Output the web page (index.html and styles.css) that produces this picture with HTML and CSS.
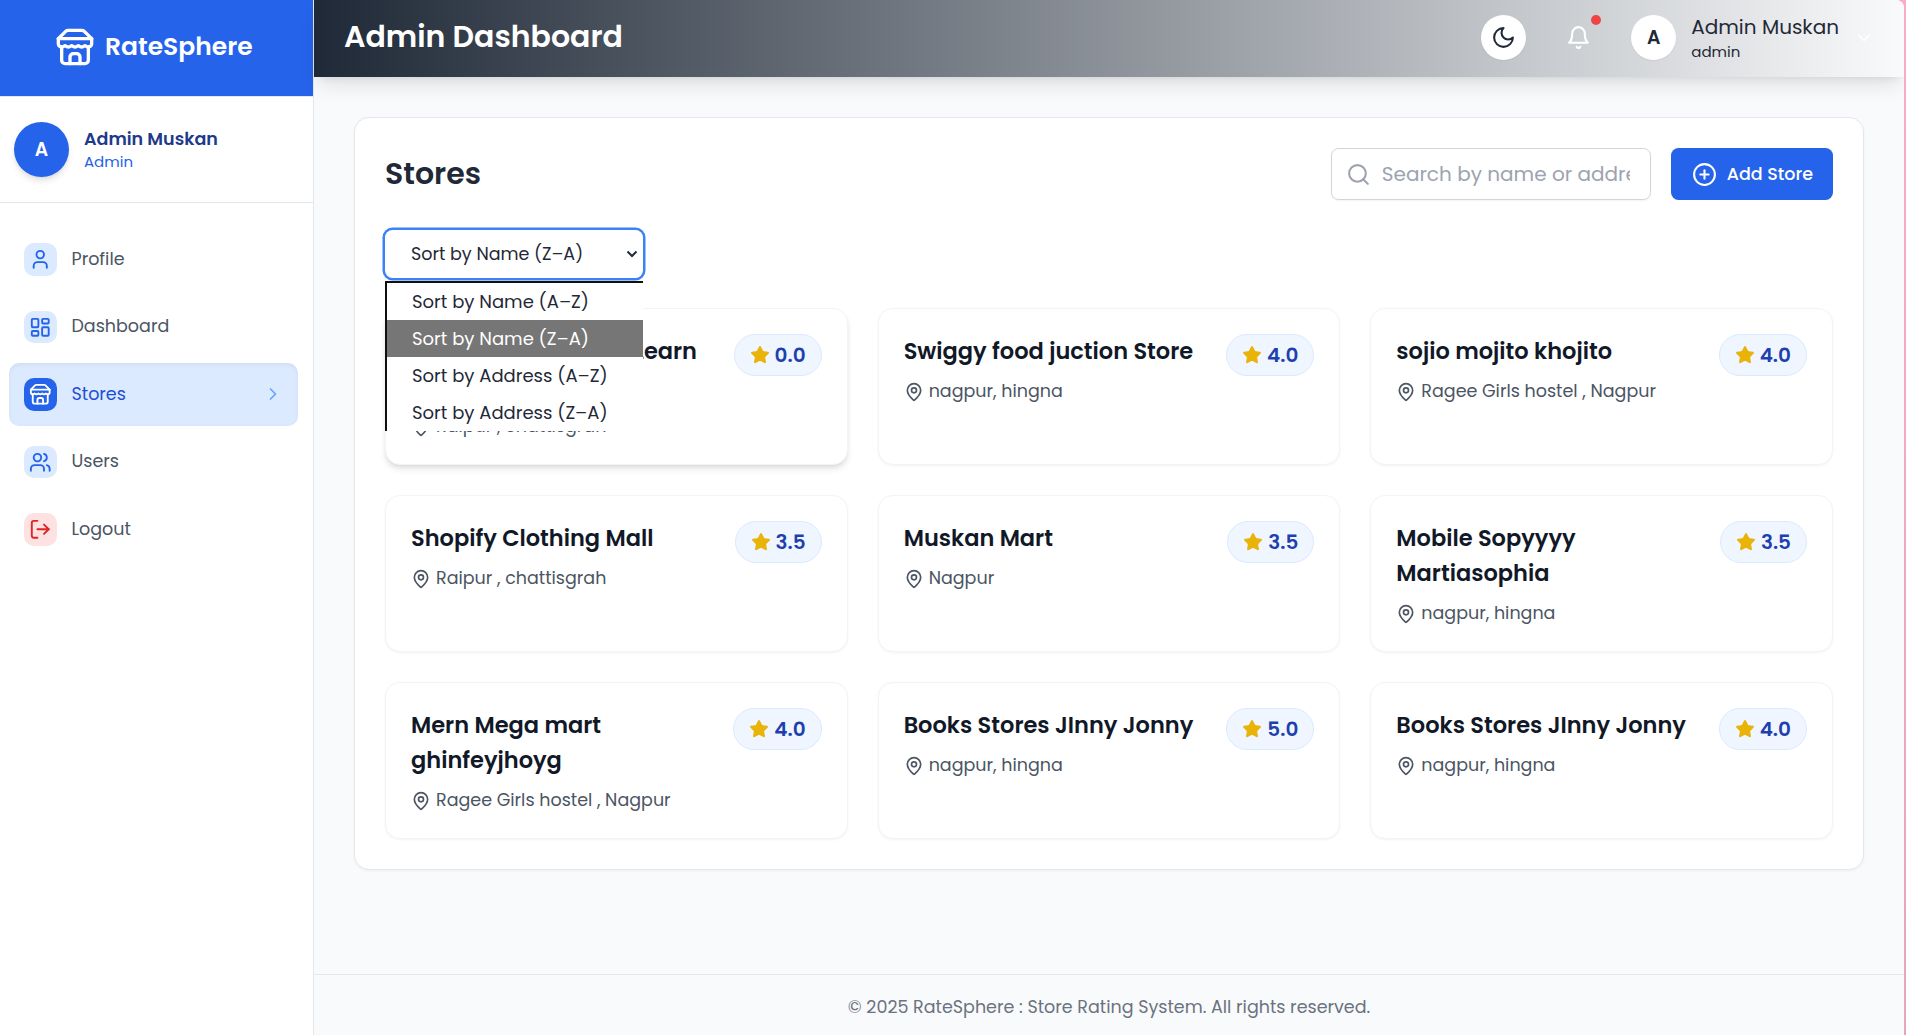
FILE: index.html
```
<!DOCTYPE html>
<html lang="en">
<head>
<meta charset="utf-8">
<title>RateSphere - Admin Dashboard</title>
<link rel="stylesheet" href="styles.css">
</head>
<body>
<svg class="sprite" aria-hidden="true">
  <symbol id="store" viewBox="0 0 24 24"><path d="m2 7 4.41-4.41A2 2 0 0 1 7.83 2h8.34a2 2 0 0 1 1.42.59L22 7"/><path d="M4 12v8a2 2 0 0 0 2 2h12a2 2 0 0 0 2-2v-8"/><path d="M15 22v-4a2 2 0 0 0-2-2h-2a2 2 0 0 0-2 2v4"/><path d="M2 7h20"/><path d="M22 7v3a2 2 0 0 1-2 2a2.7 2.7 0 0 1-1.59-.63.7.7 0 0 0-.82 0A2.7 2.7 0 0 1 16 12a2.7 2.7 0 0 1-1.59-.63.7.7 0 0 0-.82 0A2.7 2.7 0 0 1 12 12a2.7 2.7 0 0 1-1.59-.63.7.7 0 0 0-.82 0A2.7 2.7 0 0 1 8 12a2.7 2.7 0 0 1-1.59-.63.7.7 0 0 0-.82 0A2.7 2.7 0 0 1 4 12a2 2 0 0 1-2-2V7"/></symbol>
  <symbol id="user" viewBox="0 0 24 24"><path d="M19 21v-2a4 4 0 0 0-4-4H9a4 4 0 0 0-4 4v2"/><circle cx="12" cy="7" r="4"/></symbol>
  <symbol id="dashboard" viewBox="0 0 24 24"><rect x="3" y="3" width="7" height="9" rx="1"/><rect x="14" y="3" width="7" height="5" rx="1"/><rect x="14" y="12" width="7" height="9" rx="1"/><rect x="3" y="16" width="7" height="5" rx="1"/></symbol>
  <symbol id="users" viewBox="0 0 24 24"><path d="M16 21v-2a4 4 0 0 0-4-4H6a4 4 0 0 0-4 4v2"/><circle cx="9" cy="7" r="4"/><path d="M22 21v-2a4 4 0 0 0-3-3.87"/><path d="M16 3.13a4 4 0 0 1 0 7.75"/></symbol>
  <symbol id="logout" viewBox="0 0 24 24"><path d="M9 21H5a2 2 0 0 1-2-2V5a2 2 0 0 1 2-2h4"/><path d="m16 17 5-5-5-5"/><path d="M21 12H9"/></symbol>
  <symbol id="right" viewBox="0 0 24 24"><path d="m9 18 6-6-6-6"/></symbol>
  <symbol id="down" viewBox="0 0 24 24"><path d="m6 9 6 6 6-6"/></symbol>
  <symbol id="moon" viewBox="0 0 24 24"><path d="M12 3a6 6 0 0 0 9 9 9 9 0 1 1-9-9Z"/></symbol>
  <symbol id="bell" viewBox="0 0 24 24"><path d="M6 8a6 6 0 0 1 12 0c0 7 3 9 3 9H3s3-2 3-9"/><path d="M10.3 21a1.94 1.94 0 0 0 3.4 0"/></symbol>
  <symbol id="search" viewBox="0 0 24 24"><circle cx="11" cy="11" r="8"/><path d="m21 21-4.3-4.3"/></symbol>
  <symbol id="plus" viewBox="0 0 24 24"><circle cx="12" cy="12" r="10"/><path d="M8 12h8"/><path d="M12 8v8"/></symbol>
  <symbol id="pin" viewBox="0 0 24 24"><path d="M20 10c0 4.993-5.539 10.193-7.399 11.799a1 1 0 0 1-1.202 0C9.539 20.193 4 14.993 4 10a8 8 0 0 1 16 0"/><circle cx="12" cy="10" r="3"/></symbol>
  <symbol id="star" viewBox="0 0 24 24"><path d="M11.53 2.3a.53.53 0 0 1 .95 0l2.31 4.68a2.12 2.12 0 0 0 1.6 1.16l5.16.76a.53.53 0 0 1 .3.9l-3.74 3.64a2.12 2.12 0 0 0-.61 1.88l.88 5.14a.53.53 0 0 1-.77.56l-4.62-2.43a2.12 2.12 0 0 0-1.97 0L6.4 21.02a.53.53 0 0 1-.77-.56l.88-5.14a2.12 2.12 0 0 0-.61-1.88L2.16 9.8a.53.53 0 0 1 .29-.9l5.17-.76a2.12 2.12 0 0 0 1.6-1.16z"/></symbol>
</svg>
<div class="app">
  <aside class="sidebar">
    <div class="brand"><svg class="icon i40"><use href="#store"/></svg><span>RateSphere</span></div>
    <div class="account">
      <div class="account-avatar">A</div>
      <div><div class="account-name">Admin Muskan</div><div class="account-role">Admin</div></div>
    </div>
    <nav class="nav">
      <a class="nav-item"><span class="nav-icon"><svg class="icon i22"><use href="#user"/></svg></span>Profile</a>
      <a class="nav-item"><span class="nav-icon"><svg class="icon i22"><use href="#dashboard"/></svg></span>Dashboard</a>
      <a class="nav-item active"><span class="nav-icon"><svg class="icon i22"><use href="#store"/></svg></span>Stores<svg class="icon i20 nav-arrow"><use href="#right"/></svg></a>
      <a class="nav-item"><span class="nav-icon"><svg class="icon i22"><use href="#users"/></svg></span>Users</a>
      <a class="nav-item"><span class="nav-icon danger"><svg class="icon i22"><use href="#logout"/></svg></span>Logout</a>
    </nav>
  </aside>
  <div class="content">
    <header class="topbar">
      <h1>Admin Dashboard</h1>
      <div class="topbar-tools">
        <div class="round"><svg class="icon i25"><use href="#moon"/></svg></div>
        <div class="bell"><svg class="icon i25"><use href="#bell"/></svg><i class="dot"></i></div>
        <div class="profile">
          <div class="round">A</div>
          <div class="profile-text"><div class="profile-name">Admin Muskan</div><div class="profile-role">admin</div></div>
          <svg class="icon i20"><use href="#down"/></svg>
        </div>
      </div>
    </header>
    <main class="main">
      <section class="panel">
        <div class="panel-head">
          <h2>Stores</h2>
          <div class="search"><svg class="icon i25"><use href="#search"/></svg><input type="text" placeholder="Search by name or address"></div>
          <button class="add"><svg class="icon i25"><use href="#plus"/></svg>Add Store</button>
        </div>
        <div class="sort">
          <div class="sort-field">Sort by Name (Z–A)<svg class="sort-arrow" viewBox="0 0 12 8"><path d="m1.5 1.5 4.5 4.5 4.5-4.5"/></svg></div>
          <ul class="sort-menu">
            <li>Sort by Name (A–Z)</li>
            <li class="selected">Sort by Name (Z–A)</li>
            <li>Sort by Address (A–Z)</li>
            <li>Sort by Address (Z–A)</li>
          </ul>
        </div>
        <div class="grid">
          <article class="card hovered"><div><h3>Learn</h3><p><svg class="icon i20"><use href="#pin"/></svg>Raipur , chattisgrah</p></div><span class="badge"><svg class="star"><use href="#star"/></svg>0.0</span></article>
          <article class="card"><div><h3>Swiggy food juction Store</h3><p><svg class="icon i20"><use href="#pin"/></svg>nagpur, hingna</p></div><span class="badge"><svg class="star"><use href="#star"/></svg>4.0</span></article>
          <article class="card"><div><h3>sojio mojito khojito</h3><p><svg class="icon i20"><use href="#pin"/></svg>Ragee Girls hostel , Nagpur</p></div><span class="badge"><svg class="star"><use href="#star"/></svg>4.0</span></article>
          <article class="card"><div><h3>Shopify Clothing Mall</h3><p><svg class="icon i20"><use href="#pin"/></svg>Raipur , chattisgrah</p></div><span class="badge"><svg class="star"><use href="#star"/></svg>3.5</span></article>
          <article class="card"><div><h3>Muskan Mart</h3><p><svg class="icon i20"><use href="#pin"/></svg>Nagpur</p></div><span class="badge"><svg class="star"><use href="#star"/></svg>3.5</span></article>
          <article class="card"><div><h3>Mobile Sopyyyy Martiasophia</h3><p><svg class="icon i20"><use href="#pin"/></svg>nagpur, hingna</p></div><span class="badge"><svg class="star"><use href="#star"/></svg>3.5</span></article>
          <article class="card"><div><h3>Mern Mega mart ghinfeyjhoyg</h3><p><svg class="icon i20"><use href="#pin"/></svg>Ragee Girls hostel , Nagpur</p></div><span class="badge"><svg class="star"><use href="#star"/></svg>4.0</span></article>
          <article class="card"><div><h3>Books Stores JInny Jonny</h3><p><svg class="icon i20"><use href="#pin"/></svg>nagpur, hingna</p></div><span class="badge"><svg class="star"><use href="#star"/></svg>5.0</span></article>
          <article class="card"><div><h3>Books Stores JInny Jonny</h3><p><svg class="icon i20"><use href="#pin"/></svg>nagpur, hingna</p></div><span class="badge"><svg class="star"><use href="#star"/></svg>4.0</span></article>
        </div>
      </section>
    </main>
    <footer class="footer">© 2025 RateSphere : Store Rating System. All rights reserved.</footer>
  </div>
</div>
</body>
</html>
```
FILE: styles.css
```
* { box-sizing: border-box; margin: 0; padding: 0; }

body {
  height: 1035px;
  padding-right: 2px;
  overflow: hidden;
  background: linear-gradient(#fbabc5, #e6a5bd);
  color: #1f2937;
  font-family: Poppins, Inter, sans-serif;
  font-size: 17.5px;
  line-height: 25px;
}

.sprite { display: none; }

.icon { flex: none; display: block; fill: none; stroke: currentColor; stroke-width: 2; stroke-linecap: round; stroke-linejoin: round; }
.i20 { width: 20px; height: 20px; }
.i22 { width: 22.5px; height: 22.5px; }
.i25 { width: 25px; height: 25px; }
.i40 { width: 40px; height: 40px; }

.app { display: flex; height: 1035px; background: #f9fafb; border-top-right-radius: 8px; overflow: hidden; }

/* Sidebar */
.sidebar { flex: none; width: 314px; background: #fff; border-right: 1px solid #e5e7eb; }
.brand {
  display: flex; align-items: center; gap: 10px;
  height: 97px; padding: 0 0 3px 55px;
  background: #2563eb; border-bottom: 1px solid #e5e7eb;
  color: #fff; font-size: 25px; font-weight: 600; line-height: 35px;
}
.account { display: flex; align-items: center; gap: 15px; height: 106px; padding: 0 14px; border-bottom: 1px solid #e5e7eb; }
.account-avatar {
  display: flex; align-items: center; justify-content: center;
  width: 55px; height: 55px; border-radius: 50%;
  background: #2563eb; color: #fff; font-size: 18.75px; font-weight: 600;
  box-shadow: 0 5px 7px -1px rgba(0,0,0,.1), 0 2px 5px -2px rgba(0,0,0,.1);
}
.account-name { color: #1e3a8a; font-weight: 600; }
.account-role { color: #2563eb; font-size: 15px; line-height: 20px; }
.nav { display: flex; flex-direction: column; gap: 5px; padding: 25px 15px 0 9px; }
.nav-item { display: flex; align-items: center; gap: 15px; height: 62.5px; padding: 0 15px; border-radius: 10px; color: #4b5563; }
.nav-icon { display: flex; padding: 5px; border-radius: 10px; background: #dbeafe; color: #2563eb; }
.nav-icon.danger { background: #fee2e2; color: #dc2626; }
.active { background: #dbeafe; color: #1d4ed8; box-shadow: inset 0 2px 5px rgba(0,0,0,.05); }
.active .nav-icon { background: #2563eb; color: #fff; }
.nav-arrow { margin-left: auto; color: #60a5fa; }

/* Top bar */
.content { flex: 1; display: flex; flex-direction: column; min-width: 0; }
.topbar {
  display: flex; align-items: center; justify-content: space-between;
  height: 77px; padding: 0 30px 2px; z-index: 1;
  background: linear-gradient(to right, #1f2937, #f9fafb);
  box-shadow: 0 12.5px 19px -4px rgba(0,0,0,.1), 0 5px 7.5px -5px rgba(0,0,0,.1);
}
h1 { color: #fff; font-size: 30px; font-weight: 600; line-height: 40px; padding-bottom: 1px; }
.topbar-tools, .profile { display: flex; align-items: center; gap: 30px; }
.profile { gap: 15px; color: #fff; }
.round {
  display: flex; align-items: center; justify-content: center;
  width: 45px; height: 45px; border-radius: 50%;
  background: #fff; color: #1f2937; font-size: 18.75px; font-weight: 600;
  box-shadow: 0 1px 2px rgba(0,0,0,.05);
}
.bell { position: relative; display: flex; align-items: center; justify-content: center; width: 45px; height: 45px; color: #fff; }
.dot { position: absolute; top: 0; right: 0; width: 10px; height: 10px; border-radius: 50%; background: #ef4444; }
.profile-text { color: #1f2937; }
.profile-name { font-size: 20px; line-height: 28px; }
.profile-role { font-size: 15px; line-height: 21px; }

/* Stores panel */
.main { flex: 1; padding: 40px 40px 0; }
.panel { padding: 30px; background: #fff; border: 1px solid #e5e7eb; border-radius: 15px; box-shadow: 0 1px 3px rgba(0,0,0,.05); }
.panel-head { display: flex; align-items: center; height: 52px; }
h2 { flex: 1; font-size: 30px; font-weight: 600; line-height: 40px; }
.search {
  display: flex; align-items: center; gap: 11px;
  width: 320px; height: 52px; margin-right: 20px; padding: 0 20px 0 14px;
  border: 1px solid #d1d5db; border-radius: 7.5px; color: #9ca3af;
  box-shadow: 0 1px 2px rgba(0,0,0,.05);
}
.search input { flex: 1; min-width: 0; border: 0; outline: 0; background: none; font: 20px/30px Poppins, Inter, sans-serif; color: #1f2937; }
.search input::placeholder { color: #9ca3af; opacity: 1; }
.add {
  display: flex; align-items: center; gap: 10px;
  height: 52px; padding: 0 20px 0 21px; border: 0; border-radius: 7.5px;
  background: #2563eb; color: #fff; font: 500 17.5px/25px Poppins, Inter, sans-serif;
}
.sort { position: relative; width: 258px; margin: 30px 0; }
.sort-field {
  display: flex; align-items: center; justify-content: space-between;
  height: 48px; padding: 0 5px 0 26px; border-radius: 7.5px;
  background: #fff; box-shadow: 0 0 0 2.5px #3b82f6;
}
.sort-arrow { width: 12px; height: 8px; fill: none; stroke: #1f2937; stroke-width: 2; }
.sort-menu {
  position: absolute; top: 51px; left: 0; z-index: 2; width: 258px;
  border: solid #101010; border-width: 2px 0 0 2px; background: #fff; list-style: none;
}
.sort-menu li { height: 37px; padding-left: 25px; font-size: 18px; line-height: 37px; }
.sort-menu .selected { background: #767676; color: #fff; }
.grid { display: grid; grid-template-columns: repeat(3, 1fr); grid-auto-rows: 157px; gap: 30px; }
.card {
  display: flex; align-items: flex-start; justify-content: space-between; gap: 15px;
  padding: 25px; background: #fff; border: 1px solid #f3f4f6; border-radius: 15px;
  box-shadow: 0 1px 2.5px rgba(0,0,0,.05);
}
.hovered { box-shadow: 0 5px 7.5px -1px rgba(0,0,0,.1), 0 2.5px 5px -2.5px rgba(0,0,0,.1); }
h3 { color: #111827; font-size: 22.5px; font-weight: 600; line-height: 35px; }
.hovered h3 { width: 286px; height: 70px; text-align: right; }
.card p { display: flex; align-items: center; gap: 5px; margin-top: 10px; color: #4b5563; }
.badge {
  flex: none; display: flex; align-items: center; gap: 5px; height: 42px; padding: 0 15px;
  border: 1px solid #dbeafe; border-radius: 21px; background: #eff6ff;
  color: #1e40af; font-size: 20px; font-weight: 600;
}
.star { width: 20px; height: 20px; fill: #eab308; stroke: #eab308; stroke-width: 1.5; stroke-linejoin: round; }

.footer { flex: none; height: 61px; padding-top: 20px; border-top: 1px solid #e5e7eb; color: #6b7280; text-align: center; }
```
